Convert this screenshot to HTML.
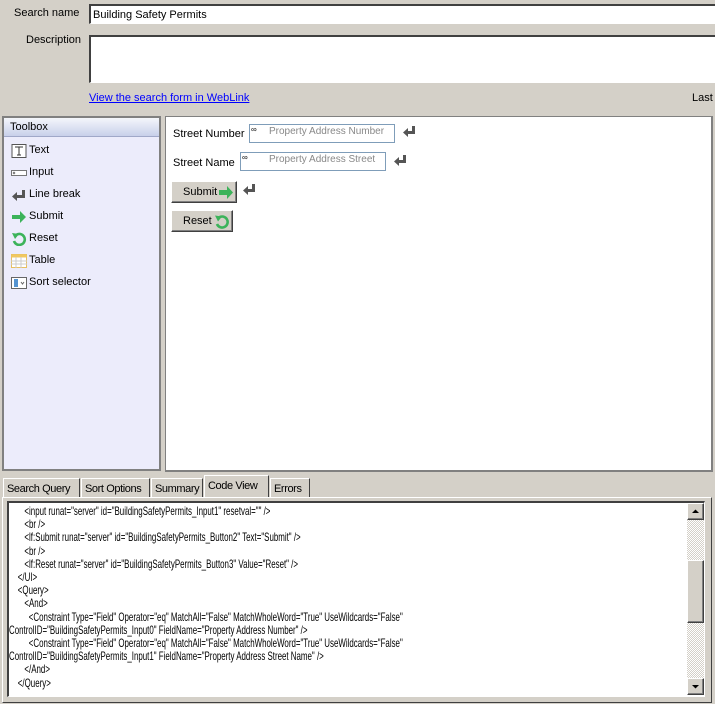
<!DOCTYPE html>
<html><head><meta charset="utf-8"><style>
*{box-sizing:border-box;margin:0;padding:0}
body{width:715px;height:704px;background:#d4d0c8;font-family:"Liberation Sans",sans-serif;font-size:11px;color:#000;position:relative;overflow:hidden}
.a{position:absolute}
.sunk{border-top:2px solid #404040;border-left:2px solid #404040;border-bottom:1px solid #fff;border-right:1px solid #fff;background:#fff}
.tb{left:9px;font-size:11px}
.ico{position:absolute;left:7px;width:16px;height:14px}
.tab{position:absolute;top:478px;height:19px;border:1px solid #fff;border-right:1px solid #404040;border-bottom:none;padding:4px 0 0 3px;font-size:11px;letter-spacing:-0.4px;white-space:nowrap;overflow:hidden}
.code{position:absolute;left:9px;top:505px;width:1100px;transform:scaleX(0.66);transform-origin:0 0;font-size:12px;line-height:13.2px;white-space:pre}
.in{position:absolute;border:1px solid #7f9db9;background:#fff;color:#888;font-size:10px;padding:1px 0 0 4px;white-space:nowrap}
.btn{position:absolute;background:#d4d0c8;border:1px solid;border-color:#fff #404040 #404040 #fff;box-shadow:inset -1px -1px #808080;font-size:11px;padding:4px 0 0 11px}
</style></head><body>
<div class="a" style="left:14px;top:7px">Search name</div>
<div class="a sunk" style="left:89px;top:4px;width:640px;height:20px;padding:3px 0 0 2px">Building Safety Permits</div>
<div class="a" style="left:26px;top:34px">Description</div>
<div class="a sunk" style="left:89px;top:35px;width:640px;height:48px"></div>
<div class="a" style="left:89px;top:92px;color:#00f;text-decoration:underline">View the search form in WebLink</div>
<div class="a" style="left:692px;top:92px">Last</div>

<div class="a" style="left:2px;top:116px;width:159px;height:355px;border:2px solid #808080;background:#ececfb">
 <div style="height:19px;background:linear-gradient(#f4f6fb,#c8d0ea);border-bottom:1px solid #a0a8c8;padding:3px 0 0 6px">Toolbox</div>
 <svg class="ico" style="top:26px" viewBox="0 0 16 14"><rect x="1" y="0.5" width="14" height="13" fill="#fff" stroke="#555"/><path d="M4 3h8M8 3v8M6 11h4" stroke="#333" fill="none"/></svg>
 <div class="a tb" style="left:25px;top:26px">Text</div>
 <svg class="ico" style="top:48px" viewBox="0 0 16 14"><rect x="0.5" y="4.5" width="15" height="5" fill="#fff" stroke="#777"/><path d="M2 6l2 2M4 6l-2 2" stroke="#777"/></svg>
 <div class="a tb" style="left:25px;top:48px">Input</div>
 <svg class="ico" style="top:70px" viewBox="0 0 16 14"><path d="M11 2h3v8H6v3L1 8.5 6 4v3h5z" fill="#555"/></svg>
 <div class="a tb" style="left:25px;top:70px">Line break</div>
 <svg class="ico" style="top:92px" viewBox="0 0 16 14"><path d="M1 5h8V1l6 6-6 6V9H1z" fill="#3cb35a"/></svg>
 <div class="a tb" style="left:25px;top:92px">Submit</div>
 <svg class="ico" style="top:114px" viewBox="0 0 16 14"><path d="M5 3A5.5 5.5 0 1 1 3 9" stroke="#3cb35a" stroke-width="2.6" fill="none"/><path d="M1 1l7 1-4 5z" fill="#3cb35a"/></svg>
 <div class="a tb" style="left:25px;top:114px">Reset</div>
 <svg class="ico" style="top:136px" viewBox="0 0 16 14"><rect x="0.5" y="0.5" width="15" height="13" fill="#fff" stroke="#e8c060"/><rect x="0.5" y="0.5" width="15" height="3" fill="#f0c860"/><path d="M0 7h16M0 10h16M5 3v11M10 3v11" stroke="#ccc"/></svg>
 <div class="a tb" style="left:25px;top:136px">Table</div>
 <svg class="ico" style="top:158px" viewBox="0 0 16 14"><rect x="0.5" y="1.5" width="15" height="11" fill="#fff" stroke="#666"/><path d="M4 3v8M6 3v8" stroke="#1a6fc0" stroke-width="1.5"/><path d="M10 6l1.5 2L13 6" stroke="#666" fill="none"/></svg>
 <div class="a tb" style="left:25px;top:158px">Sort selector</div>
</div>

<div class="a" style="left:165px;top:116px;width:548px;height:356px;background:#fff;border:1px solid #808080;border-right:2px solid #808080;border-bottom:2px solid #808080"></div>
<div class="a" style="left:173px;top:128px">Street Number</div>
<div class="in" style="left:249px;top:124px;width:146px;height:19px"><span style="color:#000;font-size:8px;position:absolute;left:1px;top:0">∞</span><span style="margin-left:15px">Property Address Number</span></div>
<svg class="a" style="left:402px;top:126px" width="15" height="12" viewBox="0 0 15 12"><path d="M10 0h3v8H6v3L1 6.5 6 2v3h4z" fill="#555"/></svg>
<div class="a" style="left:173px;top:157px">Street Name</div>
<div class="in" style="left:240px;top:152px;width:146px;height:19px"><span style="color:#000;font-size:8px;position:absolute;left:1px;top:0">∞</span><span style="margin-left:24px">Property Address Street</span></div>
<svg class="a" style="left:393px;top:155px" width="15" height="12" viewBox="0 0 15 12"><path d="M10 0h3v8H6v3L1 6.5 6 2v3h4z" fill="#555"/></svg>
<div class="btn" style="left:171px;top:181px;width:66px;height:22px">Submit<svg style="position:absolute;left:46px;top:4px" width="16" height="13" viewBox="0 0 16 13"><path d="M1 4h8V0l6 6.5-6 6.5V9H1z" fill="#3cb35a"/></svg></div>
<svg class="a" style="left:242px;top:184px" width="15" height="12" viewBox="0 0 15 12"><path d="M10 0h3v8H6v3L1 6.5 6 2v3h4z" fill="#555"/></svg>
<div class="btn" style="left:171px;top:210px;width:62px;height:22px">Reset<svg style="position:absolute;left:42px;top:3px" width="16" height="15" viewBox="0 0 16 15"><path d="M5 3.5A5.5 5.5 0 1 1 3 10" stroke="#3cb35a" stroke-width="2.6" fill="none"/><path d="M1 1.5l7 1-4 5z" fill="#3cb35a"/></svg></div>

<div class="tab" style="left:3px;width:77px">Search Query</div>
<div class="tab" style="left:81px;width:69px">Sort Options</div>
<div class="tab" style="left:151px;width:52px">Summary</div>
<div class="tab" style="left:204px;top:475px;height:22px;width:65px;background:#d4d0c8;z-index:2;padding-top:4px">Code View</div>
<div class="tab" style="left:270px;width:40px">Errors</div>
<div class="a" style="left:2px;top:497px;width:710px;height:206px;border:1px solid;border-color:#fff #404040 #404040 #fff"></div>
<div class="a sunk" style="left:7px;top:501px;width:698px;height:196px;overflow:hidden">
</div>
<div class="code">       &lt;input runat="server" id="BuildingSafetyPermits_Input1" resetval="" /&gt;
       &lt;br /&gt;
       &lt;lf:Submit runat="server" id="BuildingSafetyPermits_Button2" Text="Submit" /&gt;
       &lt;br /&gt;
       &lt;lf:Reset runat="server" id="BuildingSafetyPermits_Button3" Value="Reset" /&gt;
    &lt;/UI&gt;
    &lt;Query&gt;
       &lt;And&gt;
         &lt;Constraint Type="Field" Operator="eq" MatchAll="False" MatchWholeWord="True" UseWildcards="False"
ControlID="BuildingSafetyPermits_Input0" FieldName="Property Address Number" /&gt;
         &lt;Constraint Type="Field" Operator="eq" MatchAll="False" MatchWholeWord="True" UseWildcards="False"
ControlID="BuildingSafetyPermits_Input1" FieldName="Property Address Street Name" /&gt;
       &lt;/And&gt;
    &lt;/Query&gt;</div>
<div class="a" style="left:687px;top:503px;width:17px;height:192px;background:repeating-conic-gradient(#d4d0c8 0 25%,#fff 0 50%) 0 0/2px 2px"></div>
<div class="a btn" style="left:687px;top:503px;width:17px;height:17px;padding:0"><svg width="15" height="15"><path d="M4 9h7L7.5 5.5z" fill="#000"/></svg></div>
<div class="a btn" style="left:687px;top:560px;width:17px;height:63px;padding:0"></div>
<div class="a btn" style="left:687px;top:678px;width:17px;height:17px;padding:0"><svg width="15" height="15"><path d="M4 6h7L7.5 9.5z" fill="#000"/></svg></div>
</body></html>
